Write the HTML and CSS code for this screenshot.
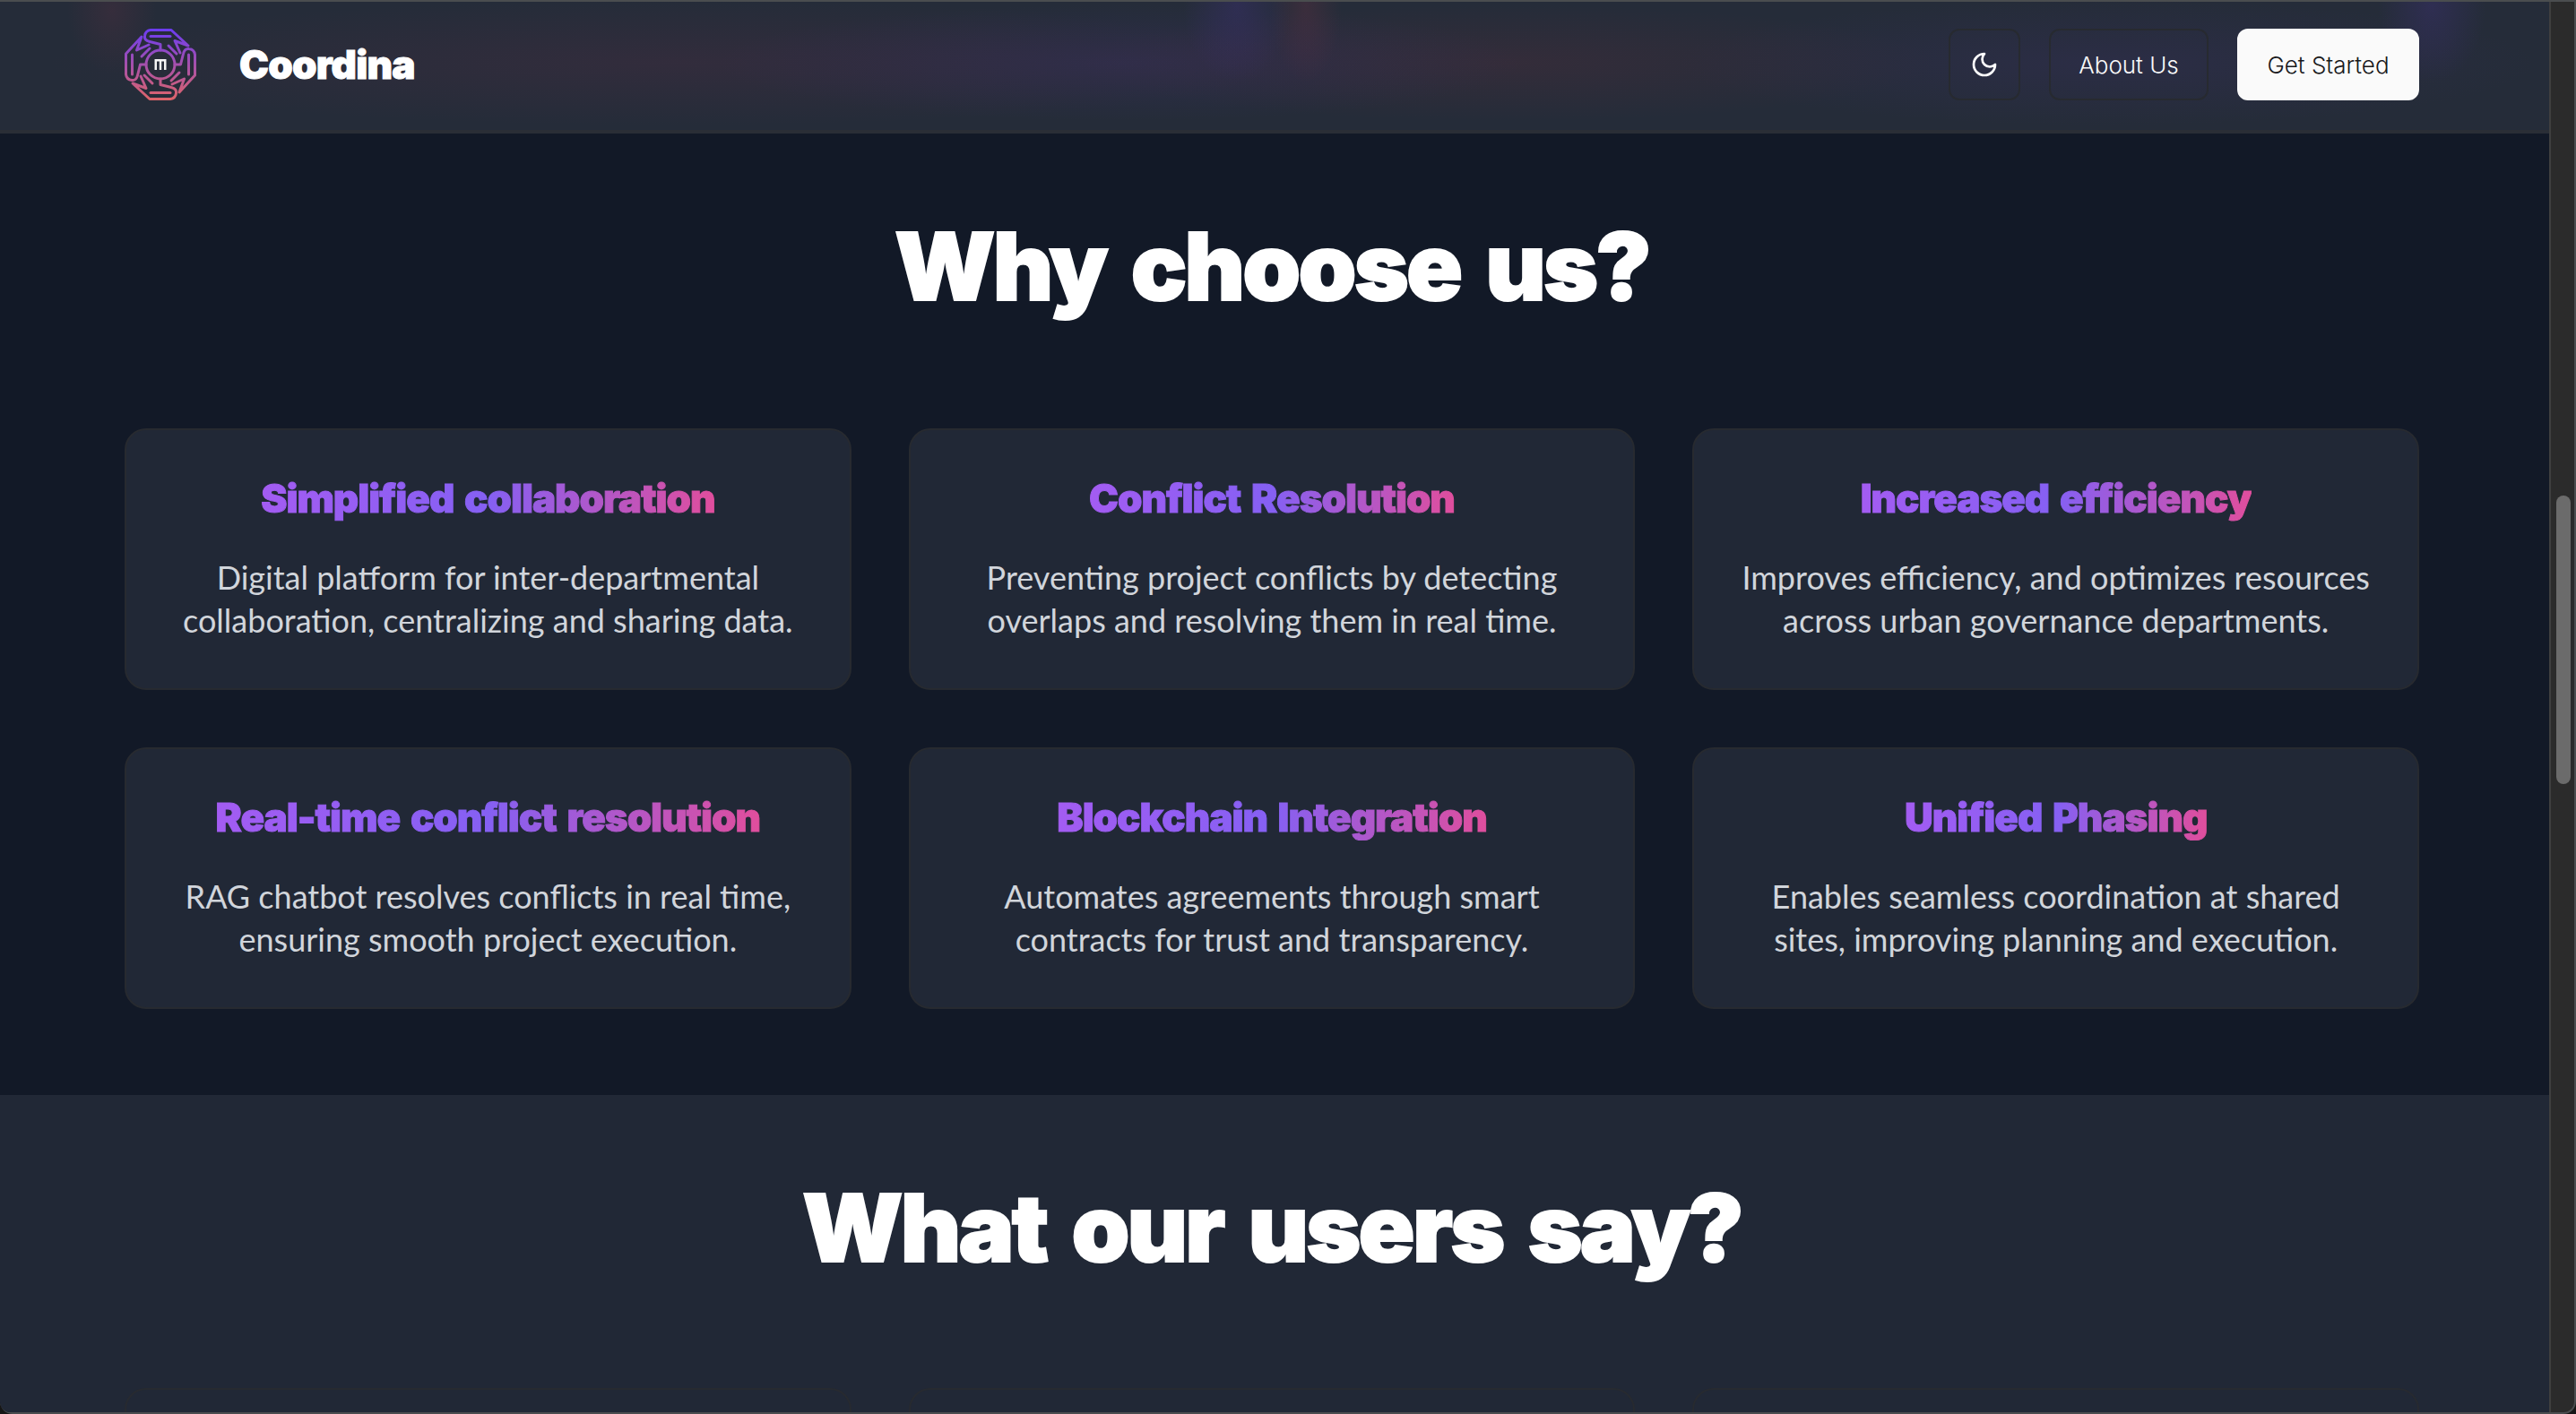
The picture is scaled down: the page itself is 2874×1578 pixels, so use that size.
FILE: index.html
```html
<!DOCTYPE html>
<html lang="en">
<head>
<meta charset="utf-8">
<title>Coordina</title>
<link rel="stylesheet" href="styles.css">
</head>
<body>
<div class="window">
  <div class="page">
    <header class="nav">
      <div class="brand">
        <svg class="logo" viewBox="0 0 80 80" aria-hidden="true">
          <defs>
            <linearGradient id="lg" x1="0" y1="0" x2="0" y2="1">
              <stop offset="0" stop-color="#6c3cf0"/>
              <stop offset="1" stop-color="#de6468"/>
            </linearGradient>
            <g id="arm" fill="none" stroke="#fff" stroke-width="3" stroke-linecap="round" stroke-linejoin="round">
              <path d="M40 24V17.5L28 14.5C23.500 13.500 22 11 22.500 8C23 4 25 2 29 1.500H52L71 19L56 13.500L62 27"/>
              <path d="M29 8.500H51"/>
              <path d="M49 19L58 28"/>
            </g>
            <mask id="lm" maskUnits="userSpaceOnUse" x="0" y="0" width="80" height="80">
              <circle cx="40" cy="40" r="16" fill="none" stroke="#fff" stroke-width="3"/>
              <use href="#arm"/>
              <use href="#arm" transform="rotate(90 40 40)"/>
              <use href="#arm" transform="rotate(180 40 40)"/>
              <use href="#arm" transform="rotate(270 40 40)"/>
            </mask>
          </defs>
          <rect width="80" height="80" fill="url(#lg)" mask="url(#lm)"/>
          <path class="logo-m" d="M33.500 46V34H46.500V46H44V36.500H41.200V46H38.800V36.500H36V46Z"/>
        </svg>
        <span class="brand-name">Coordina</span>
      </div>
      <nav class="actions">
        <button class="btn btn-icon" aria-label="Toggle theme">
          <svg class="moon" viewBox="0 0 24 24" aria-hidden="true"><path d="M12 3a6 6 0 0 0 9 9 9 9 0 1 1-9-9Z"/></svg>
        </button>
        <button class="btn btn-ghost">About Us</button>
        <button class="btn btn-solid">Get Started</button>
      </nav>
    </header>

    <section class="why">
      <h2 class="heading">Why choose us?</h2>
      <div class="grid">
        <article class="card"><h3 class="card-title">Simplified collaboration</h3><p class="card-text">Digital platform for inter-departmental<br>collaboration, centralizing and sharing data.</p></article>
        <article class="card"><h3 class="card-title">Conflict Resolution</h3><p class="card-text">Preventing project conflicts by detecting<br>overlaps and resolving them in real time.</p></article>
        <article class="card"><h3 class="card-title">Increased efficiency</h3><p class="card-text">Improves efficiency, and optimizes resources<br>across urban governance departments.</p></article>
        <article class="card"><h3 class="card-title">Real-time conflict resolution</h3><p class="card-text">RAG chatbot resolves conflicts in real time,<br>ensuring smooth project execution.</p></article>
        <article class="card"><h3 class="card-title">Blockchain Integration</h3><p class="card-text">Automates agreements through smart<br>contracts for trust and transparency.</p></article>
        <article class="card"><h3 class="card-title">Unified Phasing</h3><p class="card-text">Enables seamless coordination at shared<br>sites, improving planning and execution.</p></article>
      </div>
    </section>

    <section class="users">
      <h2 class="heading">What our users say?</h2>
      <div class="grid">
        <div class="card card-empty"></div>
        <div class="card card-empty"></div>
        <div class="card card-empty"></div>
      </div>
    </section>
  </div>
  <div class="scrollbar"><div class="thumb"></div></div>
</div>
</body>
</html>
```
FILE: styles.css
```css
* { box-sizing: border-box; }
html, body { margin: 0; height: 100%; overflow: hidden; background: #161616; }
body { font-family: "Inter", "Liberation Sans", sans-serif; color: #fff; }

.window {
  display: flex;
  height: 1578px;
  width: 2874px;
  padding: 2px 2px 2px 0;
  overflow: hidden;
  background: #4a4d4f;
  border-bottom-left-radius: 14px;
  border-bottom-right-radius: 14px;
}
.page {
  width: 2844px;
  flex: none;
  overflow: hidden;
  background: #121927;
  border-bottom-left-radius: 12px;
}
.scrollbar {
  flex: 1;
  background: #2b2b2b;
  border-left: 2px solid #3f3f3f;
  border-bottom-right-radius: 12px;
  padding: 551px 0 0 6px;
}
.thumb { height: 322px; width: 16px; border-radius: 8px; background: #6b6b6b; }

.nav {
  height: 147px;
  display: flex;
  align-items: center;
  justify-content: space-between;
  padding: 0 145px 3px 139px;
  border-bottom: 4px solid #2a2e36;
  background:
    radial-gradient(ellipse 50px 70px at 125px 10px, rgba(120,50,70,.2), transparent),
    radial-gradient(ellipse 60px 85px at 1380px 5px, rgba(70,50,140,.3), transparent),
    radial-gradient(ellipse 40px 85px at 1457px 5px, rgba(125,50,70,.25), transparent),
    radial-gradient(ellipse 60px 85px at 2713px 5px, rgba(70,50,140,.3), transparent),
    radial-gradient(ellipse 700px 70px at 750px 68px, rgba(110,45,75,.18), transparent),
    radial-gradient(ellipse 450px 65px at 1250px 68px, rgba(70,50,130,.22), transparent),
    radial-gradient(ellipse 480px 65px at 1680px 68px, rgba(120,45,60,.18), transparent),
    radial-gradient(ellipse 480px 70px at 2350px 68px, rgba(70,50,120,.2), transparent),
    #252c39;
}
.brand { display: flex; align-items: center; gap: 48px; }
.logo { width: 80px; height: 80px; display: block; }
.logo-m { fill: #f4f4f5; }
.brand-name { font-size: 44px; font-weight: 900; letter-spacing: -.75px; line-height: 1; -webkit-text-stroke: 1px #fff; }

.actions { display: flex; align-items: center; gap: 32px; }
.btn {
  height: 80px;
  border-radius: 12px;
  font-family: inherit;
  font-size: 26px;
  font-weight: 300;
  color: #fafafa;
  background: transparent;
  border: 2px solid #272a30;
  display: flex;
  align-items: center;
  justify-content: center;
}
.btn-icon { width: 80px; padding: 0; }
.btn-ghost { width: 178px; padding: 0; }
.btn-solid { width: 203px; padding: 0; background: #fafafa; color: #18181b; border-color: #fafafa; }
.moon { width: 32px; height: 32px; fill: none; stroke: #fff; stroke-width: 2; stroke-linecap: round; stroke-linejoin: round; }

.heading {
  margin: 0;
  text-align: center;
  font-size: 104px;
  line-height: 120px;
  font-weight: 900;
  letter-spacing: -2.8px;
  word-spacing: 10px;
  -webkit-text-stroke: 2px #fff;
  color: #fff;
}
.why { height: 1073px; padding: 88px 145px 0 139px; }
.why .heading { margin-bottom: 121px; }
.users { padding: 88px 145px 0 139px; background: #212836; height: 400px; }
.users .heading { margin-bottom: 119px; }

.grid { display: grid; grid-template-columns: repeat(3, 1fr); gap: 64px; }
.card {
  height: 292px;
  padding: 50px 32px 0;
  border-radius: 24px;
  background: #212836;
  border: 2px solid #272a30;
  text-align: center;
}
.card-title {
  display: inline-block;
  margin: 0 0 38px;
  font-size: 44px;
  line-height: 52px;
  font-weight: 900;
  letter-spacing: -1.05px;
  word-spacing: 4px;
  -webkit-text-stroke: 1px transparent;
  color: transparent;
  background: linear-gradient(90deg, #a35cf2 0%, #8560f3 50%, #e04e9d 100%);
  -webkit-background-clip: text;
  background-clip: text;
}
.card-text {
  margin: 0;
  font-family: "Lato", "Liberation Sans", sans-serif;
  font-size: 36px;
  line-height: 48px;
  font-weight: 400;
  color: #d1d5db;
}
```
